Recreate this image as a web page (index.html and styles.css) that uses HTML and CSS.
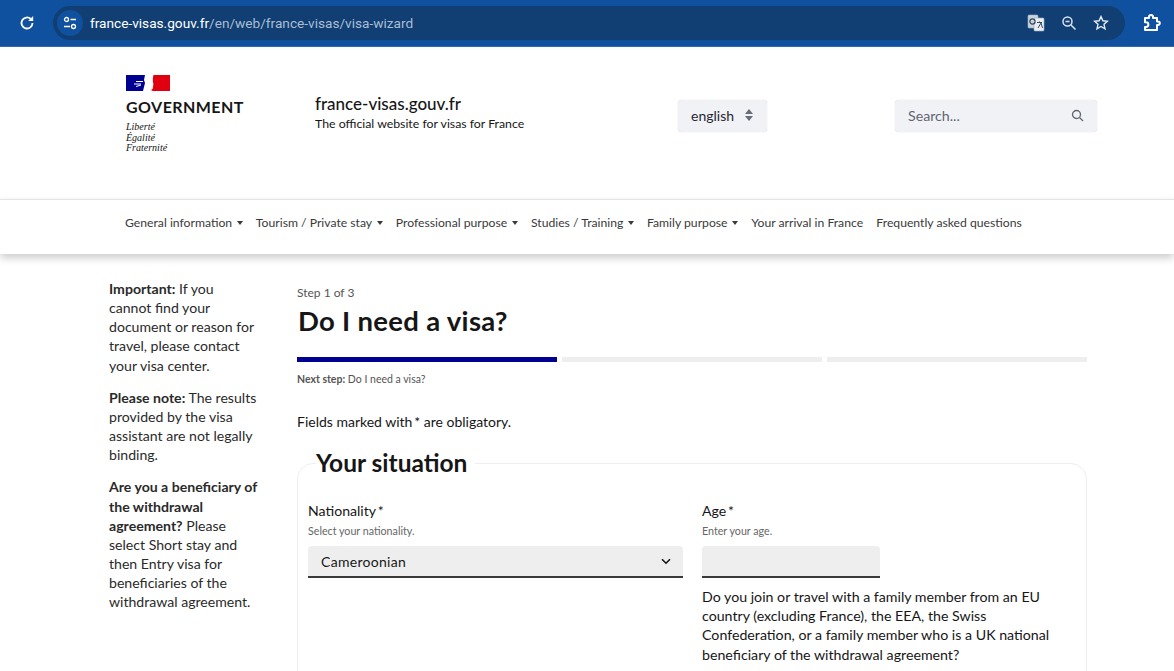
FILE: index.html
```html
<!DOCTYPE html>
<html lang="en">
<head>
  <meta charset="UTF-8" />
  <meta name="viewport" content="width=device-width, initial-scale=1" />
  <title>Visa wizard - france-visas.gouv.fr</title>
  <link rel="stylesheet" href="styles.css">
</head>
<body>
  <div class="chrome">
    <svg class="reload" width="16" height="16" viewBox="0 0 16 16"><path d="M13.500 8a5.500 5.500 0 1 1-1.700-4" fill="none" stroke="#fff" stroke-width="1.800"/><path d="M14.200 1v5H9.200z" fill="#fff"/></svg>
    <div class="omnibox">
      <span class="site-btn">
        <svg width="14" height="14" viewBox="0 0 14 14" fill="none" stroke="#fff" stroke-width="1.300"><circle cx="3.500" cy="3.500" r="2"/><path d="M7.500 3.500H13M1 10.500h6"/><circle cx="10.500" cy="10.500" r="2"/></svg>
      </span>
      <span class="url"><b>france-visas.gouv.fr</b>/en/web/france-visas/visa-wizard</span>
      <span class="omni-icons">
        <svg width="18" height="18" viewBox="0 0 18 18"><rect x="1" y="1" width="10" height="13" rx="1" fill="#c9d3dd" stroke="#9fb0c2" stroke-width=".6"/><rect x="7" y="4" width="10" height="13" rx="1" fill="#e9eef3" stroke="#9fb0c2" stroke-width=".6"/><circle cx="5.500" cy="7.500" r="2.600" fill="none" stroke="#34495e" stroke-width="1.200"/><path d="M10 8.500h5M12.500 7.500v1M11 14l3-5 1.500 5" fill="none" stroke="#34495e" stroke-width="1"/></svg>
        <svg width="16" height="16" viewBox="0 0 16 16" fill="none" stroke="#d7e2ee" stroke-width="1.500"><circle cx="6.500" cy="6.500" r="4.500"/><path d="M10 10l4.500 4.500M4.500 6.500h4"/></svg>
        <svg width="16" height="16" viewBox="0 0 16 16" fill="none" stroke="#e4ecf4" stroke-width="1.400"><path d="M8 1.600l1.900 4.200 4.500.5-3.400 3 1 4.500L8 11.500l-4 2.300 1-4.500-3.400-3 4.500-.5z"/></svg>
      </span>
    </div>
    <svg class="puzzle" width="18" height="18" viewBox="0 0 18 18" fill="none" stroke="#fff" stroke-width="2"><path d="M2 4h4V3a2 2 0 0 1 4 0v1h4v3.500h1a1.800 1.800 0 0 1 0 3.600h-1V16H2v-3h1a2.300 2.300 0 0 0 0-4.800H2z" stroke-linejoin="round"/></svg>
  </div>

  <header class="site-header">
    <div class="brand">
      <svg class="flag" width="44" height="16" viewBox="0 0 44 16">
        <rect width="44" height="16" fill="#fff"/>
        <path d="M0 0h19l-1 5 1 3-1 4-1 4H0z" fill="#000091"/>
        <path d="M27.500 0H44v16H27c-1 0-2.500-.4-2.500-.9 1-.4 2-.7 2.300-1.500.2-.8 0-1.300.2-2 .4-.3.5-.6.3-.9-.4-.3-.4-.5-.1-.8.4-.2.2-.5-.1-.7.6-.3.4-.7 0-1.300C26.600 5 26.800 2 27.500 0z" fill="#e1000f"/>
        <path d="M10 6.500h7M8 9h7M10 11.500l5-1.500" stroke="#fff" stroke-width="1" fill="none"/>
      </svg>
      <div class="gov">GOVERNMENT</div>
      <div class="motto">Liberté<br>Égalité<br>Fraternité</div>
    </div>
    <div class="site-title">
      <div class="site-name">france-visas.gouv.fr</div>
      <div class="site-sub">The official website for visas for France</div>
    </div>
    <div class="lang">english
      <svg width="8" height="14" viewBox="0 0 8 14" fill="#666e78"><path d="M4 1l4 5H0zM4 13L0 8h8z"/></svg>
    </div>
    <div class="search">
      <span>Search...</span>
      <svg width="13" height="13" viewBox="0 0 13 13" fill="none" stroke="#5f6670" stroke-width="1.300"><circle cx="5.500" cy="5.500" r="4"/><path d="M8.500 8.500l3.500 3.500"/></svg>
    </div>
  </header>

  <nav class="main-nav">
    <a class="drop">General information</a>
    <a class="drop">Tourism / Private stay</a>
    <a class="drop">Professional purpose</a>
    <a class="drop">Studies / Training</a>
    <a class="drop">Family purpose</a>
    <a>Your arrival in France</a>
    <a>Frequently asked questions</a>
  </nav>

  <div class="page">
    <aside class="notes">
      <p><strong>Important:</strong> If you cannot find your document or reason for travel, please contact your visa center.</p>
      <p><strong>Please note:</strong> The results provided by the visa assistant are not legally binding.</p>
      <p><strong>Are you a beneficiary of the withdrawal agreement?</strong> Please select Short stay and then Entry visa for beneficiaries of the withdrawal agreement.</p>
    </aside>

    <main class="wizard">
      <div class="step-count">Step 1 of 3</div>
      <h1>Do I need a visa?</h1>
      <div class="steps">
        <span class="active"></span><span></span><span></span>
      </div>
      <div class="next-step"><strong>Next step:</strong> Do I need a visa?</div>
      <p class="obligatory">Fields marked with&#8201;* are obligatory.</p>

      <fieldset class="situation">
        <legend>Your situation</legend>
        <div class="fields">
          <div class="field">
            <label>Nationality&#8201;*</label>
            <div class="hint">Select your nationality.</div>
            <div class="select">Cameroonian
              <svg width="10" height="7" viewBox="0 0 10 7" fill="none" stroke="#161616" stroke-width="1.600"><path d="M1 1.200l4 4 4-4"/></svg>
            </div>
          </div>
          <div class="field">
            <label>Age&#8201;*</label>
            <div class="hint">Enter your age.</div>
            <div class="age-input"></div>
            <p class="question">Do you join or travel with a family member from an EU country (excluding France), the EEA, the Swiss Confederation, or a family member who is a UK national beneficiary of the withdrawal agreement?</p>
          </div>
        </div>
      </fieldset>
    </main>
  </div>
</body>
</html>
```

FILE: styles.css
```css
html, body {
  height: 671px;
  overflow: hidden;
}

body {
  margin: 0;
  background: #fff;
  color: #161616;
  font-family: "Lato", sans-serif;
}

/* browser bar */
.chrome {
  height: 47px;
  box-sizing: border-box;
  padding: 6px 13px 7px 19px;
  display: flex;
  align-items: center;
  background: #0f519f;
  border-bottom: 1px solid #2f6aae;
}

.reload {
  flex: none;
}

.omnibox {
  flex: 1;
  height: 34px;
  margin: 0 18px;
  padding: 0 16px 0 4px;
  display: flex;
  align-items: center;
  border-radius: 17px;
  background: #113f74;
}

.site-btn {
  width: 26px;
  height: 26px;
  margin-right: 7px;
  display: flex;
  align-items: center;
  justify-content: center;
  border-radius: 50%;
  background: #0f519f;
}

.url {
  flex: 1;
  font-family: "Roboto", sans-serif;
  font-size: 13.650px;
  color: #a9bdd3;
}

.url b {
  font-weight: 400;
  color: #fff;
}

.omni-icons {
  display: flex;
  align-items: center;
  gap: 16px;
}

.puzzle {
  flex: none;
}

/* header */
.site-header {
  height: 152px;
  box-sizing: border-box;
  padding: 28px 77px 0 126px;
  display: flex;
  align-items: flex-start;
}

.brand {
  width: 189px;
}

.flag {
  display: block;
}

.gov {
  margin-top: 6px;
  font-size: 16px;
  line-height: 20px;
  font-weight: 700;
  letter-spacing: .45px;
}

.motto {
  margin-top: 5px;
  font-family: "Liberation Serif", serif;
  font-style: italic;
  font-size: 10px;
  line-height: 10.700px;
}

.site-title {
  width: 363px;
  padding-top: 18px;
}

.site-name {
  font-size: 17px;
  line-height: 22px;
  font-weight: 500;
}

.site-sub {
  font-size: 12.300px;
  line-height: 18px;
}

.lang {
  width: 89px;
  height: 32px;
  margin-top: 25px;
  box-sizing: border-box;
  padding: 0 14px 2px 13px;
  display: flex;
  align-items: center;
  justify-content: space-between;
  border-radius: 4px;
  background: #f1f2f6;
  box-shadow: 0 0 1px rgba(0, 0, 0, .25);
  font-size: 14px;
  color: #272833;
}

.search {
  width: 202px;
  height: 32px;
  margin: 25px 0 0 128px;
  box-sizing: border-box;
  padding: 0 13px 2px;
  display: flex;
  align-items: center;
  justify-content: space-between;
  border-radius: 4px;
  background: #f1f2f6;
  box-shadow: 0 0 1px rgba(0, 0, 0, .25);
  font-size: 14.200px;
  color: #5f6670;
}

/* nav */
.main-nav {
  position: relative;
  height: 55px;
  box-sizing: border-box;
  padding: 0 0 10px 125px;
  display: flex;
  align-items: center;
  gap: 13.200px;
  border-top: 1px solid #e4e4e4;
  background: #fff;
  box-shadow: 0 4px 8px rgba(0, 0, 0, .2);
  font-size: 12.200px;
  color: #3a3a3a;
}

.drop::after {
  content: "";
  display: inline-block;
  margin-left: 4.500px;
  vertical-align: 2px;
  border: 3px solid transparent;
  border-top: 4px solid #3a3a3a;
  border-bottom: 0;
}

/* content */
.page {
  padding: 25px 87px 0 109px;
  display: flex;
  gap: 38px;
}

.notes {
  width: 150px;
  flex: none;
  font-size: 14.100px;
  line-height: 19.150px;
  color: #2a2a2a;
}

.notes p {
  margin: 0 0 13px;
}

.wizard {
  flex: 1;
  min-width: 0;
}

.step-count {
  margin-top: 6px;
  font-size: 12px;
  line-height: 16px;
  color: #555;
}

h1 {
  margin: 2px 0 0 1px;
  font-size: 27.500px;
  line-height: 36px;
  font-weight: 700;
  letter-spacing: .3px;
}

.steps {
  margin-top: 18px;
  display: flex;
  gap: 5px;
}

.steps span {
  flex: 1;
  height: 5px;
  background: #eee;
}

.steps .active {
  background: #000091;
}

.next-step {
  margin-top: 10px;
  font-size: 10.500px;
  line-height: 15px;
  color: #555;
}

.obligatory {
  margin: 25px 0 0;
  font-size: 14px;
  line-height: 20px;
}

.situation {
  margin: 15px 0 0;
  padding: 22px 10px 0;
  min-height: 300px;
  border: 1px solid #eee;
  border-radius: 16px;
  min-width: 0;
}

legend {
  margin-left: 8px;
  padding: 0 8px 0 0;
  font-size: 24.500px;
  line-height: 32px;
  font-weight: 700;
}

.fields {
  display: grid;
  grid-template-columns: 375px 1fr;
  gap: 19px;
}

.field label {
  display: block;
  font-size: 14.100px;
  line-height: 20px;
}

.hint {
  margin: 2px 0 8px;
  font-size: 10.700px;
  line-height: 15px;
  color: #666;
}

.select {
  height: 32px;
  box-sizing: border-box;
  padding: 0 12px 0 13px;
  display: flex;
  align-items: center;
  justify-content: space-between;
  border-radius: 4px 4px 0 0;
  border-bottom: 2px solid #3a3a3a;
  background: #eee;
  font-size: 14px;
  letter-spacing: .3px;
}

.age-input {
  width: 178px;
  height: 32px;
  box-sizing: border-box;
  border-radius: 4px 4px 0 0;
  border-bottom: 2px solid #3a3a3a;
  background: #eee;
}

.question {
  margin: 9px 0 0;
  width: 360px;
  font-size: 14.200px;
  line-height: 19.200px;
}
```
